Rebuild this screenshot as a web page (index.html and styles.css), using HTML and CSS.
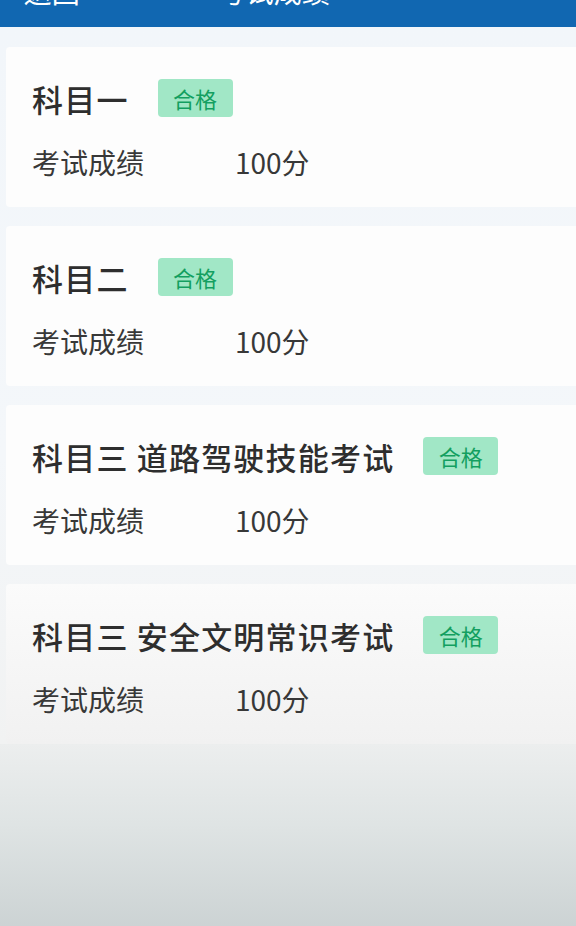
FILE: index.html
```html
<!DOCTYPE html>
<html lang="zh-CN">
<head>
    <meta charset="UTF-8">
    <meta name="viewport" content="width=device-width, initial-scale=1.0">
    <title>考试成绩</title>
    <link rel="stylesheet" href="styles.css">
</head>
<body>
    <div class="header">
        <span class="back">&lt; 返回</span>
        <span class="title">考试成绩</span>
    </div>

    <div class="list">
        <div class="card">
            <div class="card-head">
                <span class="subject">科目一</span>
                <span class="badge">合格</span>
            </div>
            <div class="score-row">
                <span class="label">考试成绩</span>
                <span class="score">100分</span>
            </div>
        </div>

        <div class="card">
            <div class="card-head">
                <span class="subject">科目二</span>
                <span class="badge">合格</span>
            </div>
            <div class="score-row">
                <span class="label">考试成绩</span>
                <span class="score">100分</span>
            </div>
        </div>

        <div class="card">
            <div class="card-head">
                <span class="subject">科目三 道路驾驶技能考试</span>
                <span class="badge">合格</span>
            </div>
            <div class="score-row">
                <span class="label">考试成绩</span>
                <span class="score">100分</span>
            </div>
        </div>

        <div class="card last">
            <div class="card-head">
                <span class="subject">科目三 安全文明常识考试</span>
                <span class="badge">合格</span>
            </div>
            <div class="score-row">
                <span class="label">考试成绩</span>
                <span class="score">100分</span>
            </div>
        </div>
    </div>

    <div class="bottom"></div>
</body>
</html>
```

FILE: styles.css
```css
body {
    margin: 0;
    font-family: "Noto Sans CJK SC", "Noto Sans", sans-serif;
    background-color: #f1f5f8;
    color: #333333;
}

/* header is scrolled up, only the bottom edge of its text shows */
.header {
    height: 27px;
    overflow: hidden;
    background-color: #1167b1;
    color: #ffffff;
    display: flex;
    align-items: flex-end;
}

.header span {
    line-height: 30px;
    font-size: 28px;
    transform: translateY(-21px);
}

.back {
    padding-left: 2px;
    font-size: 24px;
}

.title {
    margin-left: 138px;
}

.list {
    display: flex;
    flex-direction: column;
    gap: 19px;
    padding: 20px 0 0 6px;
    background: linear-gradient(#f2f6fa, #f4f7fa 60%, #f1f2f2);
}

.card {
    height: 160px;
    box-sizing: border-box;
    padding: 32px 0 0 26px;
    background-color: #fdfdfd;
    border-radius: 4px 0 0 4px;
}

.card.last {
    background: linear-gradient(#fbfbfb, #f1f1f1);
}

.card-head {
    display: flex;
    align-items: center;
    gap: 29px;
    height: 38px;
}

.subject {
    font-size: 31px;
    font-weight: 500;
    color: #2e2e2e;
    letter-spacing: 1.2px;
}

.badge {
    display: inline-block;
    width: 75px;
    height: 38px;
    line-height: 38px;
    text-align: center;
    font-size: 22px;
    color: #139f60;
    background-color: #a1e7c6;
    border-radius: 4px;
}

.score-row {
    display: flex;
    margin-top: 29px;
    font-size: 28px;
    line-height: 32px;
    color: #383838;
}

.label {
    width: 203px;
}

.bottom {
    height: 200px;
    background: linear-gradient(#eceeee, #dfe4e4 40%, #c9d0d1);
}
```
